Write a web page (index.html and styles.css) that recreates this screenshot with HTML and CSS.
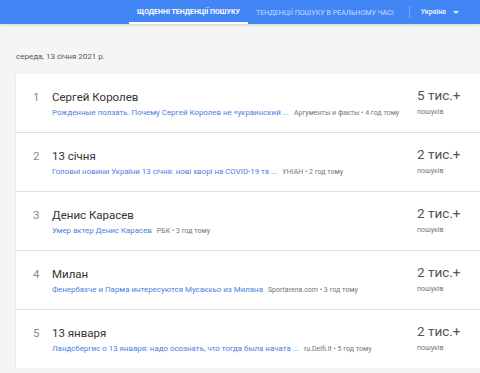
FILE: index.html
```html
<!DOCTYPE html>
<html lang="uk">

<head>
    <meta charset="UTF-8">
    <meta name="viewport" content="width=device-width, initial-scale=1.0">
    <title>Тенденції пошуку</title>
    <link rel="stylesheet" href="styles.css">
</head>

<body>
    <header class="topbar">
        <nav class="tabs">
            <a class="tab active">Щоденні тенденції пошуку</a>
            <a class="tab">Тенденції пошуку в реальному часі</a>
            <span class="divider"></span>
            <span class="geo">Україна <svg class="caret" viewBox="0 0 10 5"><path d="M0 0 L10 0 L5 5 Z" /></svg></span>
        </nav>
    </header>

    <main class="feed">
        <div class="date">середа, 13 січня 2021 р.</div>

        <div class="card">
            <div class="row">
                <div class="num">1</div>
                <div class="info">
                    <div class="title">Сергей Королев</div>
                    <div class="sub"><a class="link">Рожденные ползать. Почему Сергей Королев не «украинский ...</a> <span class="source">Аргументы и факты • 4 год тому</span></div>
                </div>
                <div class="count">
                    <div class="value">5 тис.+</div>
                    <div class="unit">пошуків</div>
                </div>
            </div>

            <div class="row">
                <div class="num">2</div>
                <div class="info">
                    <div class="title">13 січня</div>
                    <div class="sub"><a class="link">Головні новини України 13 січня: нові хворі на COVID-19 та ...</a> <span class="source">УНІАН • 2 год тому</span></div>
                </div>
                <div class="count">
                    <div class="value">2 тис.+</div>
                    <div class="unit">пошуків</div>
                </div>
            </div>

            <div class="row">
                <div class="num">3</div>
                <div class="info">
                    <div class="title">Денис Карасев</div>
                    <div class="sub"><a class="link">Умер актер Денис Карасев</a> <span class="source">РБК • 3 год тому</span></div>
                </div>
                <div class="count">
                    <div class="value">2 тис.+</div>
                    <div class="unit">пошуків</div>
                </div>
            </div>

            <div class="row">
                <div class="num">4</div>
                <div class="info">
                    <div class="title">Милан</div>
                    <div class="sub"><a class="link">Фенербахче и Парма интересуются Мусаккьо из Милана</a> <span class="source">Sportarena.com • 3 год тому</span></div>
                </div>
                <div class="count">
                    <div class="value">2 тис.+</div>
                    <div class="unit">пошуків</div>
                </div>
            </div>

            <div class="row">
                <div class="num">5</div>
                <div class="info">
                    <div class="title">13 января</div>
                    <div class="sub"><a class="link">Ландсбергис о 13 января: надо осознать, что тогда была начата ...</a> <span class="source">ru.Delfi.lt • 5 год тому</span></div>
                </div>
                <div class="count">
                    <div class="value">2 тис.+</div>
                    <div class="unit">пошуків</div>
                </div>
            </div>
        </div>
    </main>
</body>

</html>
```

FILE: styles.css
```css
body {
    margin: 0;
    background-color: #f5f5f5;
    font-family: Roboto, "Liberation Sans", Arial, sans-serif;
    color: #333;
    overflow: hidden;
}

.topbar {
    background-color: #4285f4;
    height: 24px;
    box-shadow: 0 1px 2px rgba(0, 0, 0, 0.15);
}

.tabs {
    display: flex;
    align-items: center;
    height: 24px;
    padding-left: 129px;
}

.tab {
    display: flex;
    align-items: center;
    height: 24px;
    box-sizing: border-box;
    padding: 0 8px;
    font-size: 7.1px;
    text-transform: uppercase;
    color: rgba(255, 255, 255, 0.72);
    white-space: nowrap;
}

.tab.active {
    font-size: 7px;
    font-weight: bold;
    color: white;
    border-bottom: 2px solid white;
    padding-top: 2px;
    width: 119px;
}

.divider {
    width: 1px;
    height: 12px;
    background-color: rgba(255, 255, 255, 0.3);
    margin-left: 7px;
    margin-right: 11px;
}

.geo {
    display: flex;
    align-items: center;
    gap: 7px;
    font-size: 7px;
    font-weight: bold;
    color: rgba(255, 255, 255, 0.85);
}

.caret {
    width: 6px;
    height: 3px;
    fill: rgba(255, 255, 255, 0.85);
}

.feed {
    padding: 0 0 0 16px;
}

.date {
    font-size: 8px;
    color: #555;
    padding-top: 28px;
    height: 22px;
    line-height: 10px;
}

.card {
    background-color: white;
    width: 480px;
    box-shadow: 0 1px 2px rgba(0, 0, 0, 0.12);
}

.row {
    display: flex;
    height: 59px;
    box-sizing: border-box;
    border-bottom: 1px solid #e0e0e0;
}

.row:last-child {
    border-bottom: none;
    height: 58px;
}

.num {
    width: 19px;
    padding-left: 17px;
    padding-top: 14px;
    font-size: 11.5px;
    line-height: 18px;
    color: #8a8a8a;
}

.info {
    width: 365px;
    padding-top: 14px;
}

.title {
    font-size: 11.5px;
    line-height: 18px;
    color: #333;
}

.sub {
    margin-top: 2px;
    font-size: 7.9px;
    line-height: 10px;
    white-space: nowrap;
}

.link {
    color: #4a7ee0;
}

.source {
    color: #757575;
    margin-left: 3px;
    font-size: 7px;
}

.count {
    padding-top: 12px;
}

.value {
    font-size: 13.5px;
    line-height: 18px;
    color: #555;
}

.unit {
    margin-top: 3px;
    font-size: 7px;
    line-height: 10px;
    color: #757575;
}
```
